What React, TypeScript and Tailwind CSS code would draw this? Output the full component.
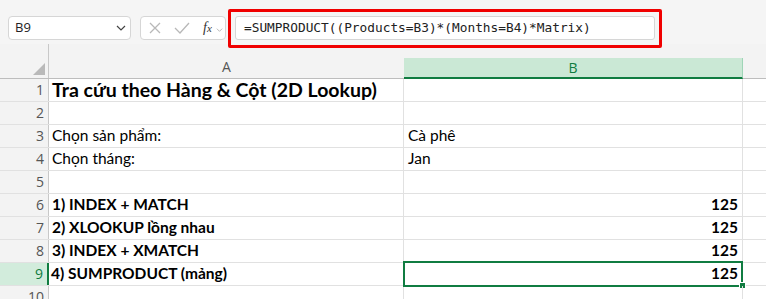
import type { ReactNode } from "react";

type Row = {
  n: number;
  a?: string;
  b?: string;
  bold?: boolean;
  big?: boolean;
  right?: boolean;
};

const ROWS: Row[] = [
  { n: 1, a: "Tra cứu theo Hàng & Cột (2D Lookup)", bold: true, big: true },
  { n: 2 },
  { n: 3, a: "Chọn sản phẩm:", b: "Cà phê" },
  { n: 4, a: "Chọn tháng:", b: "Jan" },
  { n: 5 },
  { n: 6, a: "1) INDEX + MATCH", b: "125", bold: true, right: true },
  { n: 7, a: "2) XLOOKUP lồng nhau", b: "125", bold: true, right: true },
  { n: 8, a: "3) INDEX + XMATCH", b: "125", bold: true, right: true },
  { n: 9, a: "4) SUMPRODUCT (mảng)", b: "125", bold: true, right: true },
  { n: 10 },
];

function Chevron({ className }: { className?: string }) {
  return (
    <svg viewBox="0 0 10 6" className={className} fill="none" stroke="currentColor" strokeWidth="1.2">
      <polyline points="1,1 5,5 9,1" />
    </svg>
  );
}

function Cell({ children, className }: { children?: ReactNode; className?: string }) {
  return <div className={`flex h-full items-end pb-[2px] leading-[19px] ${className ?? ""}`}>{children}</div>;
}

export default function App() {
  return (
    <div className="relative h-[299px] w-[766px] overflow-hidden bg-[#f5f5f5] font-['Lato',sans-serif] text-black">
      {/* formula bar */}
      <div className="flex h-[44px] items-start pt-[9px]">
        <div className="ml-[8px] mt-[7px] flex h-[24px] w-[123px] items-center justify-between rounded-[4px] border border-[#d6d6d6] bg-white pl-[6px] pr-[4px]">
          <span className="font-['Open_Sans',sans-serif] text-[13px] text-[#222]">B9</span>
          <Chevron className="h-[6px] w-[10px] text-[#444]" />
        </div>
        <div className="ml-[9px] mt-[7px] flex h-[24px] w-[86px] items-center rounded-[4px] border border-[#d6d6d6] bg-white pl-[8px]">
          <svg viewBox="0 0 12 12" className="h-[12px] w-[12px] text-[#b8b8b8]" fill="none" stroke="currentColor" strokeWidth="1.3">
            <path d="M1 1 L11 11 M11 1 L1 11" />
          </svg>
          <svg viewBox="0 0 16 12" className="ml-[13px] h-[12px] w-[16px] text-[#b8b8b8]" fill="none" stroke="currentColor" strokeWidth="1.3">
            <polyline points="1,6 6,11 15,1" />
          </svg>
          <span className="ml-[13px] font-['Liberation_Serif',serif] text-[14px] italic leading-none text-[#333]">
            f<span className="text-[11px]">x</span>
          </span>
          <Chevron className="ml-[4px] mt-[3px] h-[4px] w-[7px] text-[#aaa]" />
        </div>
        <div className="ml-[2px] h-[39px] w-[434px] rounded-[2px] border-[3px] border-[#f00000] pl-[4px] pr-[4px] pt-[4px]">
          <div className="flex h-[24px] items-center rounded-[3px] border border-[#d6d6d6] bg-white pl-[8px]">
            <span className="font-['DejaVu_Sans_Mono',monospace] text-[12.8px] text-[#222]">
              =SUMPRODUCT((Products=B3)*(Months=B4)*Matrix)
            </span>
          </div>
        </div>
      </div>

      {/* column headers */}
      <div className="flex h-[35px] border-b border-[#bdbdbd] bg-[#f3f3f3]">
        <div className="relative w-[49px] border-r border-[#c8c8c8]">
          <div className="absolute bottom-[3px] right-[3px] h-0 w-0 border-b-[12px] border-l-[12px] border-b-[#b9b9b9] border-l-transparent" />
        </div>
        <div className="flex w-[355px] items-end justify-center pb-[1px] font-['Open_Sans',sans-serif] text-[14px] text-[#555]">
          A
        </div>
        <div className="flex w-[339px] items-end pt-[13px]">
          <div className="-mb-[1px] flex h-full w-full items-center justify-center border-b-2 border-r border-b-[#107c41] border-r-[#9fd5b7] bg-[#cae8d5] font-['Open_Sans',sans-serif] text-[14px] text-[#107c41]">
            B
          </div>
        </div>
        <div className="flex-1" />
      </div>

      {/* grid rows */}
      {ROWS.map((r) => {
        const sel = r.n === 9;
        return (
          <div key={r.n} className="flex h-[23px] border-b border-[#e1e1e1] bg-white">
            <div
              className={`flex w-[49px] items-end justify-end pb-[1px] pr-[4px] font-['Open_Sans',sans-serif] text-[14px] ${
                sel
                  ? "border-r-2 border-r-[#107c41] bg-[#d2ecdc] text-[#107c41]"
                  : "border-r border-r-[#c8c8c8] bg-[#f3f3f3] text-[#555]"
              }`}
            >
              {r.n}
            </div>
            <div className={`w-[355px] border-r border-[#e1e1e1] ${sel ? "-ml-[1px] w-[356px]" : ""}`}>
              <Cell className={`pl-[3px] ${r.bold ? "font-bold" : ""} ${r.big ? "text-[19.5px]" : "text-[15.5px]"}`}>
                {r.a}
              </Cell>
            </div>
            <div className="relative w-[339px] border-r border-[#e1e1e1]">
              <Cell className={`text-[15.5px] ${r.bold ? "font-bold" : ""} ${r.right ? "justify-end pr-[4px]" : "pl-[4px]"}`}>
                {r.b}
              </Cell>
              {sel && (
                <>
                  <div className="absolute -left-[1px] -top-[2px] -bottom-[2px] -right-[1px] border-2 border-[#107c41]" />
                  <div className="absolute -bottom-[4px] -right-[4px] h-[7px] w-[7px] border border-white bg-[#107c41]" />
                </>
              )}
            </div>
            <div className="flex-1" />
          </div>
        );
      })}
    </div>
  );
}
